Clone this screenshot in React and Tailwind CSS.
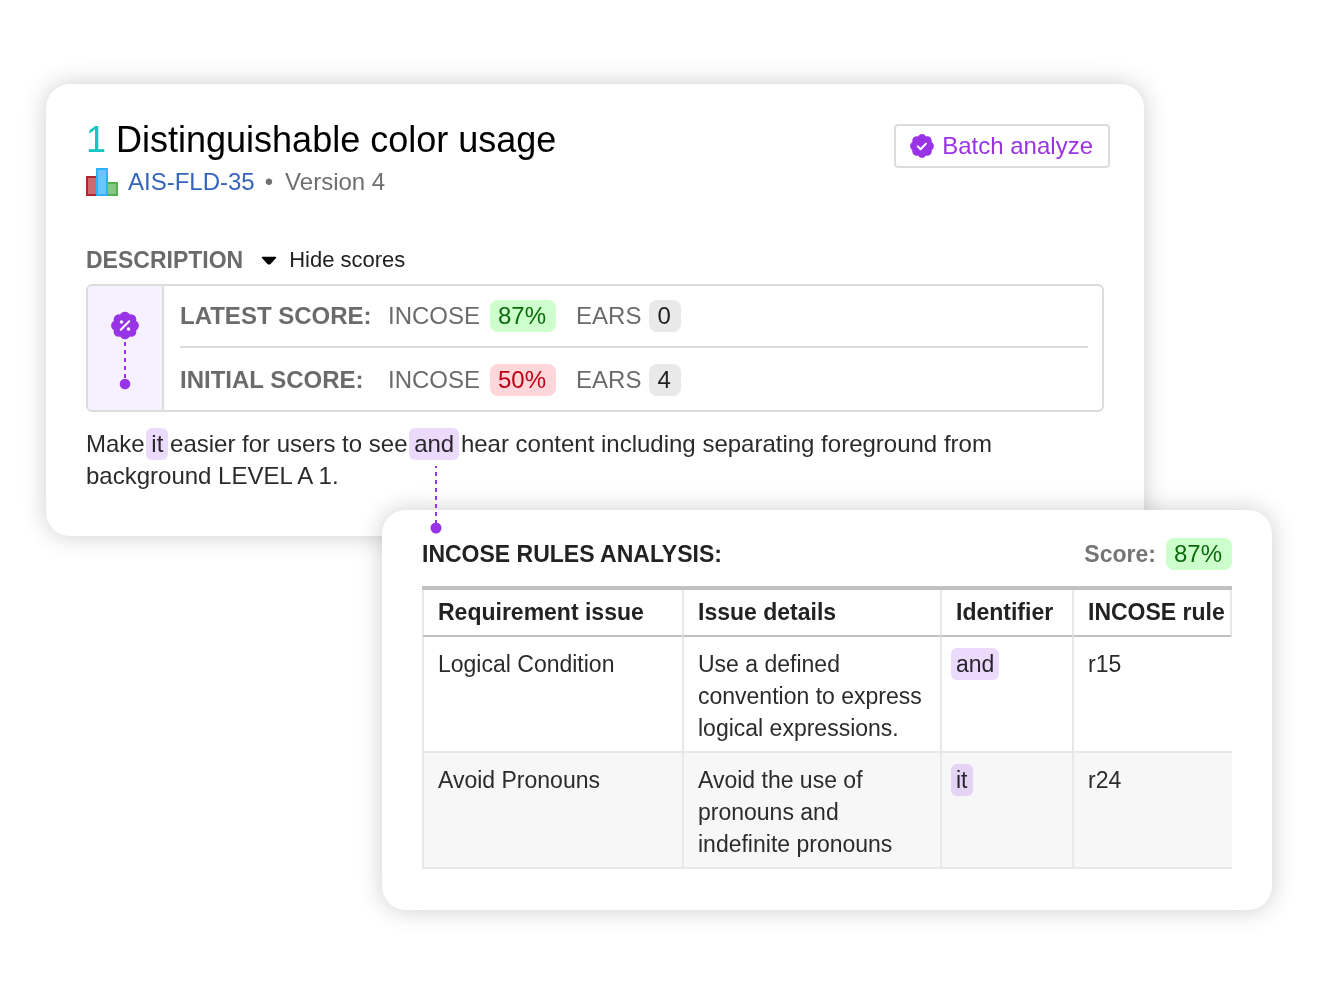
import React from "react";

const issues = [
  {
    issue: "Logical Condition",
    details: "Use a defined convention to express logical expressions.",
    identifier: "and",
    rule: "r15",
  },
  {
    issue: "Avoid Pronouns",
    details: "Avoid the use of pronouns and indefinite pronouns",
    identifier: "it",
    rule: "r24",
  },
];

// Centres of the eight bumps round the badge, on a 24px grid
const bumps = [
  [12, 4.6],
  [17.23, 6.77],
  [19.4, 12],
  [17.23, 17.23],
  [12, 19.4],
  [6.77, 17.23],
  [4.6, 12],
  [6.77, 6.77],
];

function Rosette() {
  return (
    <g fill="#9933e6">
      <circle cx="12" cy="12" r="10" />
      {bumps.map(([x, y]) => (
        <circle key={`${x}-${y}`} cx={x} cy={y} r="4.5" />
      ))}
    </g>
  );
}

function CheckBadge() {
  return (
    <svg className="size-6 shrink-0" viewBox="0 0 24 24" aria-hidden="true">
      <Rosette />
      <path
        d="M7.8 12.4l2.8 2.8l5.4-5.6"
        fill="none"
        stroke="#fff"
        strokeWidth="2"
        strokeLinecap="round"
        strokeLinejoin="round"
      />
    </svg>
  );
}

// Percent badge with the dashed line running down to the initial score
function ScoreTrail() {
  return (
    <svg width="28" height="80" viewBox="0 0 28 80" aria-hidden="true">
      <svg x="0" y="1.5" width="28" height="28" viewBox="0 0 24 24">
        <Rosette />
        <path d="M8.4 15.6l7.2-7.2" stroke="#fff" strokeWidth="1.8" strokeLinecap="round" />
        <circle cx="9" cy="9" r="1.5" fill="#fff" />
        <circle cx="15" cy="15" r="1.5" fill="#fff" />
      </svg>
      <path d="M14 32V72" stroke="#9933e6" strokeWidth="2" strokeDasharray="4 4" />
      <circle cx="14" cy="74" r="5.3" fill="#9933e6" />
    </svg>
  );
}

function BlocksIcon() {
  return (
    <svg width="32" height="28" viewBox="0 0 32 28" aria-hidden="true">
      <rect x="1" y="9" width="12" height="18" fill="#cc6a6e" stroke="#b0282f" strokeWidth="2" />
      <rect x="21" y="15" width="10" height="12" fill="#87c686" stroke="#55b04f" strokeWidth="2" />
      <rect x="11" y="1" width="10" height="26" fill="#6ac5ff" stroke="#2fb0fb" strokeWidth="2" />
    </svg>
  );
}

// The tint reaches 5px past the word on each side without moving the text
function Mark({ children }) {
  return (
    <mark className="relative inline-block bg-transparent text-inherit before:absolute before:inset-y-0 before:-inset-x-[5px] before:rounded-md before:bg-[#ecdafd] before:mix-blend-multiply">
      {children}
    </mark>
  );
}

function Score({ children, className }) {
  return (
    <span className={`rounded-lg pr-2.5 pl-2 text-2xl leading-8 ${className}`}>
      {children}
    </span>
  );
}

function ScoreRow({ label, incose, incoseClass, ears }) {
  return (
    <div className="flex items-center text-2xl leading-8 text-[#6b6b6b]">
      <h3 className="w-52 font-bold">{label}</h3>
      <div className="flex gap-5">
        <div className="flex gap-2.5">
          INCOSE <Score className={incoseClass}>{incose}</Score>
        </div>
        <div className="flex gap-2">
          EARS <Score className="bg-[#e9e9e9] text-[#222]">{ears}</Score>
        </div>
      </div>
    </div>
  );
}

function RequirementCard() {
  return (
    <section className="mr-32 rounded-3xl bg-white pt-9 pr-[34px] pb-11 pl-10 shadow-[0_0_24px_rgba(0,0,0,0.2)]">
      <header className="flex items-start justify-between">
        <div>
          <h1 className="text-4xl text-black">
            <span className="text-[#13c4c0]">1</span> Distinguishable color usage
          </h1>
          <div className="mt-1.5 flex items-center text-2xl leading-8 text-[#6f6f6f]">
            <BlocksIcon />
            <a href="#requirement" className="ml-2.5 text-[#3564be]">
              AIS-FLD-35
            </a>
            <span className="mr-3 ml-2.5">•</span>
            <span>Version 4</span>
          </div>
        </div>
        <button
          type="button"
          className="mt-1 flex h-11 items-center gap-2 rounded border-2 border-[#dcdcdc] pr-[15px] pl-3.5 text-2xl leading-8 text-[#9933e6]"
        >
          <CheckBadge />
          Batch analyze
        </button>
      </header>

      <div className="mt-[46px] pr-1.5">
        <div className="flex items-center leading-8">
          <h2 className="text-[23px] leading-8 font-bold text-[#6b6b6b]">DESCRIPTION</h2>
          <button type="button" className="ml-[18px] flex items-center gap-3 text-[22px] leading-8 text-[#222]">
            <svg width="16" height="10" viewBox="0 0 16 10" aria-hidden="true">
              <path
                d="M1.5 2.5H14.5L9 8.4Q8 9.2 7 8.4Z"
                fill="#000"
                stroke="#000"
                strokeWidth="1.5"
                strokeLinejoin="round"
              />
            </svg>
            Hide scores
          </button>
        </div>

        <div className="mt-2 flex overflow-hidden rounded-md border-2 border-[#dcdcdc]">
          <div className="flex w-[76px] shrink-0 justify-center border-r-2 border-[#dcdcdc] bg-[#f6f0ff] pt-6">
            <ScoreTrail />
          </div>
          <div className="grow py-3.5 pr-3.5 pl-4">
            <ScoreRow
              label="LATEST SCORE:"
              incose="87%"
              incoseClass="bg-[#ccffcc] text-[#0b6b0b]"
              ears="0"
            />
            <hr className="mt-3.5 mb-4 border-t-2 border-[#dcdcdc]" />
            <ScoreRow
              label="INITIAL SCORE:"
              incose="50%"
              incoseClass="bg-[#ffd6da] text-[#bf0013]"
              ears="4"
            />
          </div>
        </div>

        <p className="mt-4 text-2xl leading-8 text-[#2b2b2b]">
          Make <Mark>it</Mark> easier for users to see{" "}
          <Mark>
            and
            {/* Connector to the analysis card */}
            <svg
              className="absolute top-[38px] left-4 z-10"
              width="12"
              height="68"
              viewBox="0 0 12 68"
              aria-hidden="true"
            >
              <path
                d="M6 0V60"
                stroke="#9933e6"
                strokeWidth="2"
                strokeDasharray="4 4"
                strokeDashoffset="2"
              />
              <circle cx="6" cy="62" r="5.5" fill="#9933e6" />
            </svg>
          </Mark>{" "}
          hear content including separating foreground from background LEVEL A 1.
        </p>
      </div>
    </section>
  );
}

function AnalysisCard() {
  return (
    <section className="relative z-0 -mt-[26px] ml-[336px] rounded-3xl bg-white px-10 pt-7 pb-[41px] shadow-[0_0_24px_rgba(0,0,0,0.2)]">
      <header className="flex items-center justify-between text-[23px] leading-8 font-bold">
        <h2 className="text-[#222]">INCOSE RULES ANALYSIS:</h2>
        <div className="flex gap-2.5 text-[#757575]">
          Score: <Score className="bg-[#ccffcc] font-normal text-[#0b6b0b]">87%</Score>
        </div>
      </header>

      <table className="mt-4 w-full table-fixed border-separate border-spacing-0 border-t-4 border-[#c1c1c1] text-left text-[23px] leading-8 text-[#2b2b2b]">
        <colgroup>
          <col className="w-[260px]" />
          <col className="w-[258px]" />
          <col className="w-[132px]" />
          <col />
        </colgroup>
        <thead>
          <tr className="text-[#222] *:border-b-2 *:border-l-2 *:border-x-[#e8e8e8] *:border-b-[#c1c1c1] *:pt-1.5 *:pb-[7px] *:pl-3.5 *:whitespace-nowrap">
            <th scope="col">Requirement issue</th>
            <th scope="col">Issue details</th>
            <th scope="col">Identifier</th>
            <th scope="col" className="border-r-2">INCOSE rule</th>
          </tr>
        </thead>
        <tbody>
          {issues.map((row) => (
            <tr
              key={row.rule}
              className="align-top even:bg-[#f7f7f7] *:border-b-2 *:border-l-2 *:border-[#e8e8e8] *:px-3.5 *:pt-[11px] *:pb-[7px]"
            >
              <td>{row.issue}</td>
              <td>{row.details}</td>
              <td>
                <Mark>{row.identifier}</Mark>
              </td>
              <td>{row.rule}</td>
            </tr>
          ))}
        </tbody>
      </table>
    </section>
  );
}

function App() {
  return (
    <main className="min-h-screen bg-white px-[46px] pt-[84px] pb-[90px] font-['Liberation_Sans',Arial,sans-serif]">
      <RequirementCard />
      <AnalysisCard />
    </main>
  );
}

export default App;
